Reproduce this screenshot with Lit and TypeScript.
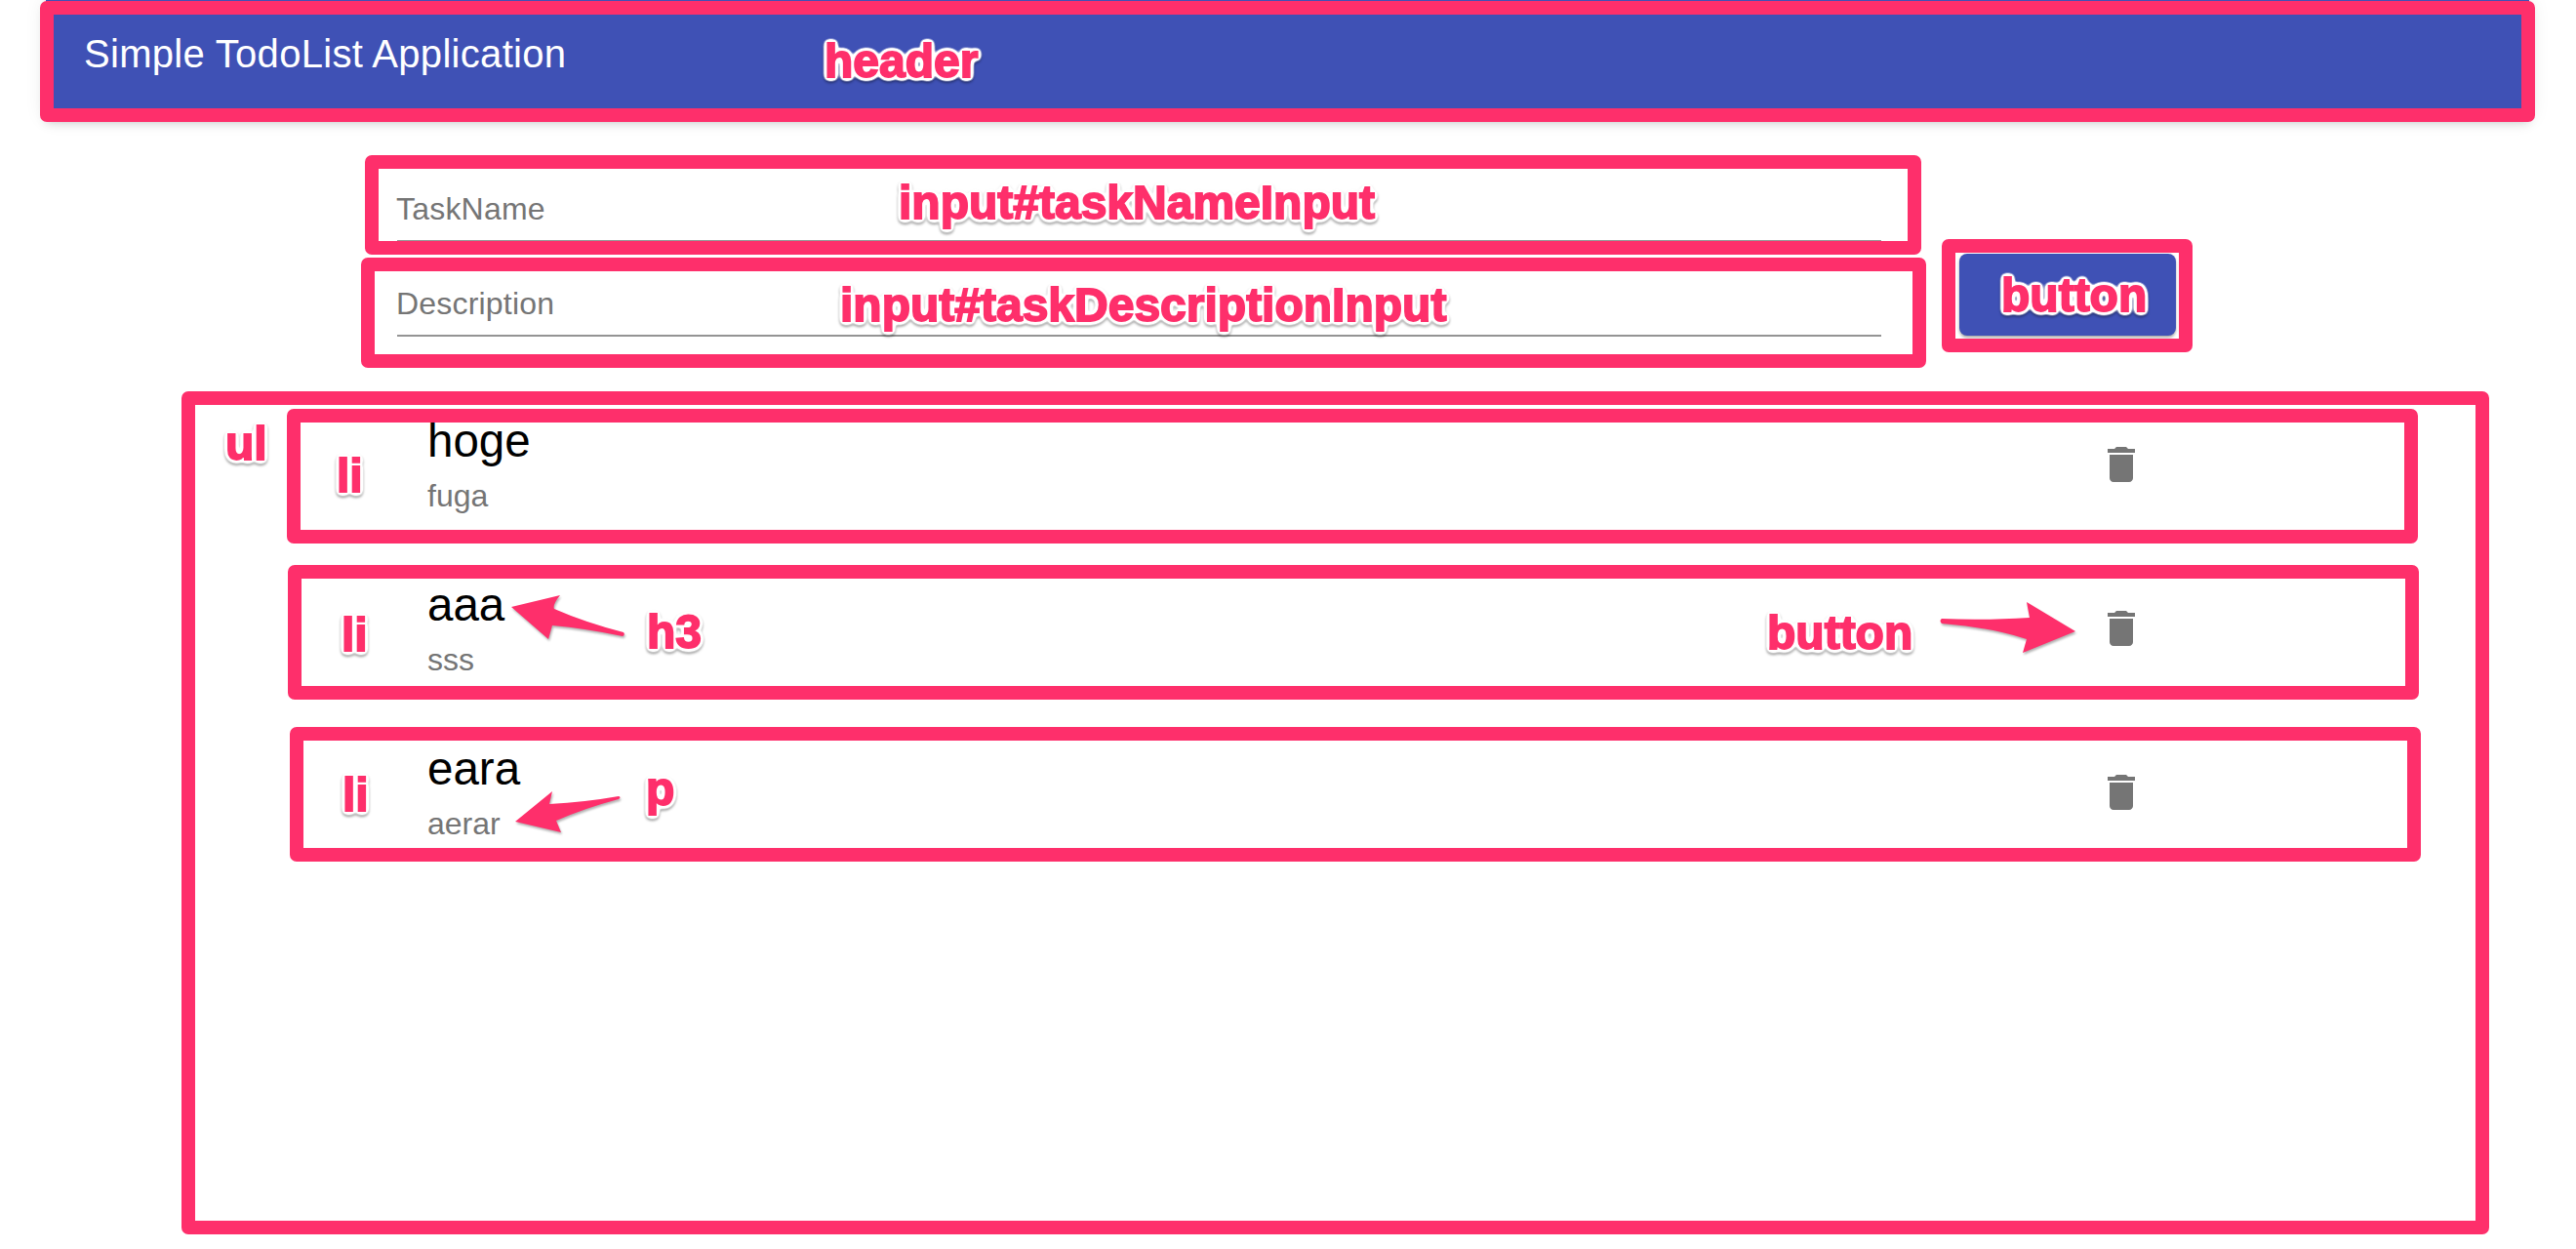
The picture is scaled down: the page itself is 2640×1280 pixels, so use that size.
import { LitElement, css, html, svg } from "lit";
import { customElement, state } from "lit/decorators.js";

type Todo = { name: string; description: string };

const FRAMES = [
  [41, 1, 2598, 125],
  [374, 159, 1969, 261],
  [370, 264, 1974, 377],
  [1990, 245, 2247, 361],
  [186, 401, 2551, 1265],
  [294, 419, 2478, 557],
  [295, 579, 2479, 717],
  [297, 745, 2481, 883],
];

const TAGS: [string, number, number][] = [
  ["header", 845, 79],
  ["input#taskNameInput", 921, 224],
  ["input#taskDescriptionInput", 861, 329],
  ["button", 2051, 319],
  ["ul", 231, 471],
  ["li", 345, 504],
  ["li", 350, 667],
  ["li", 351, 831],
  ["h3", 663, 664],
  ["button", 1811, 665],
  ["p", 662, 825],
];

const ARROWS = [
  "M524 622L574 610Q566 620 568 624Q600 638 639 648Q641 651 638 652Q600 644 566 641L562 655Z",
  "M2127 647L2077 617L2080 633Q2030 636 1990 634Q1987 636 1990 639Q2040 643 2077 655L2073 669Z",
  "M528 842L566 811L563 824Q600 822 634 816Q637 817 634 819Q600 828 570 841L575 853Z",
];

@customElement("app-root")
export class AppRoot extends LitElement {
  static styles = css`
    :host {
      display: block;
      position: relative;
      width: 2640px;
      height: 1280px;
      overflow: hidden;
      background: #fff;
      font-family: "Liberation Sans", Arial, sans-serif;
    }
    .appbar {
      height: 118px;
      margin: 0 48px 0 47px;
      padding: 32px 0 0 39px;
      box-sizing: border-box;
      background: #3f51b5;
      color: #fff;
      font-size: 40px;
      letter-spacing: 0.3px;
      line-height: 46px;
      box-shadow: 0 4px 8px -2px rgba(0, 0, 0, 0.2), 0 8px 10px rgba(0, 0, 0, 0.14), 0 2px 20px rgba(0, 0, 0, 0.12);
    }
    .form {
      display: flex;
      align-items: flex-end;
      gap: 80px;
      margin: 33px 0 0 407px;
    }
    .fields {
      width: 1521px;
    }
    .field {
      display: grid;
      height: 97px;
      box-sizing: border-box;
      border-bottom: 2px solid #949494;
      color: #757575;
      font-size: 32px;
    }
    .field > * {
      grid-area: 1 / 1;
    }
    .field span {
      align-self: end;
      margin-left: -1px;
      padding-bottom: 13px;
      letter-spacing: 0.2px;
      line-height: 37px;
    }
    .field.desc span {
      padding-bottom: 13px;
    }
    .field input {
      border: 0;
      outline: 0;
      background: transparent;
      font: inherit;
    }
    .add {
      width: 222px;
      height: 84px;
      margin-bottom: 1px;
      border: 0;
      border-radius: 8px;
      background: #3f51b5;
      box-shadow: 0 2px 3px rgba(0, 0, 0, 0.35);
    }
    .list {
      width: 1760px;
      margin: 55px 0 0 200px;
      padding: 0 0 0 238px;
      list-style: none;
    }
    .item {
      display: flex;
      justify-content: space-between;
      height: 168px;
    }
    .item h3 {
      margin: 0;
      padding-top: 25px;
      color: #000;
      font-size: 47.5px;
      font-weight: 400;
      line-height: 54px;
    }
    .item p {
      margin: 0;
      padding-top: 11px;
      color: #757575;
      font-size: 32px;
      line-height: 37px;
    }
    .trash {
      width: 48px;
      height: 48px;
      margin: 52px 0 0;
      padding: 0;
      border: 0;
      background: none;
    }
    .trash svg {
      display: block;
      width: 48px;
      height: 48px;
      fill: #757575;
    }
    .notes {
      position: absolute;
      inset: 0;
      width: 2640px;
      height: 1280px;
      pointer-events: none;
    }
    .frame {
      fill: none;
      stroke: #fe2f6b;
      stroke-width: 14;
      stroke-linejoin: round;
    }
    .arrow {
      fill: #fe2f6b;
      filter: drop-shadow(1px 2px 1px rgba(0, 0, 0, 0.3));
    }
    .tag {
      fill: #fe2f6b;
      stroke: #fe2f6b;
      stroke-width: 1.8;
      font-family: "Liberation Sans", Arial, sans-serif;
      font-size: 48px;
      font-weight: 700;
    }
  `;

  @state() private todos: Todo[] = [
    { name: "hoge", description: "fuga" },
    { name: "aaa", description: "sss" },
    { name: "eara", description: "aerar" },
  ];

  private renderTodo(todo: Todo) {
    return html`<li class="item">
      <div>
        <h3>${todo.name}</h3>
        <p>${todo.description}</p>
      </div>
      <button class="trash" aria-label="delete">
        <svg viewBox="0 0 24 24">
          <path d="M6 19c0 1.1.9 2 2 2h8c1.1 0 2-.9 2-2V7H6v12zM19 4h-3.5l-1-1h-5l-1 1H5v2h14V4z"></path>
        </svg>
      </button>
    </li>`;
  }

  private renderNotes() {
    return html`<svg class="notes" viewBox="0 0 2640 1280">
      <defs>
        <filter id="halo" x="-20%" y="-40%" width="140%" height="180%" color-interpolation-filters="sRGB">
          <feGaussianBlur in="SourceAlpha" stdDeviation="2.6"></feGaussianBlur>
          <feComponentTransfer result="grown">
            <feFuncA type="linear" slope="9" intercept="-0.35"></feFuncA>
          </feComponentTransfer>
          <feFlood flood-color="#fff"></feFlood>
          <feComposite in2="grown" operator="in" result="white"></feComposite>
          <feOffset in="grown" dy="2"></feOffset>
          <feGaussianBlur stdDeviation="1" result="drop"></feGaussianBlur>
          <feFlood flood-color="#000" flood-opacity="0.35"></feFlood>
          <feComposite in2="drop" operator="in" result="shadow"></feComposite>
          <feMerge>
            <feMergeNode in="shadow"></feMergeNode>
            <feMergeNode in="white"></feMergeNode>
            <feMergeNode in="SourceGraphic"></feMergeNode>
          </feMerge>
        </filter>
      </defs>
      ${FRAMES.map(
        ([l, t, r, b]) =>
          svg`<rect class="frame" x=${l + 7} y=${t + 7} width=${r - l - 14} height=${b - t - 14}></rect>`,
      )}
      ${ARROWS.map((d) => svg`<path class="arrow" d=${d}></path>`)}
      ${TAGS.map(
        ([label, x, y]) => svg`<text class="tag" x=${x} y=${y} filter="url(#halo)">${label}</text>`,
      )}
    </svg>`;
  }

  render() {
    return html`
      <header class="appbar">Simple TodoList Application</header>
      <form class="form" @submit=${(e: Event) => e.preventDefault()}>
        <div class="fields">
          <label class="field"><span>TaskName</span><input id="taskNameInput" /></label>
          <label class="field desc"><span>Description</span><input id="taskDescriptionInput" /></label>
        </div>
        <button class="add" aria-label="add"></button>
      </form>
      <ul class="list">
        ${this.todos.map((todo) => this.renderTodo(todo))}
      </ul>
      ${this.renderNotes()}
    `;
  }
}
